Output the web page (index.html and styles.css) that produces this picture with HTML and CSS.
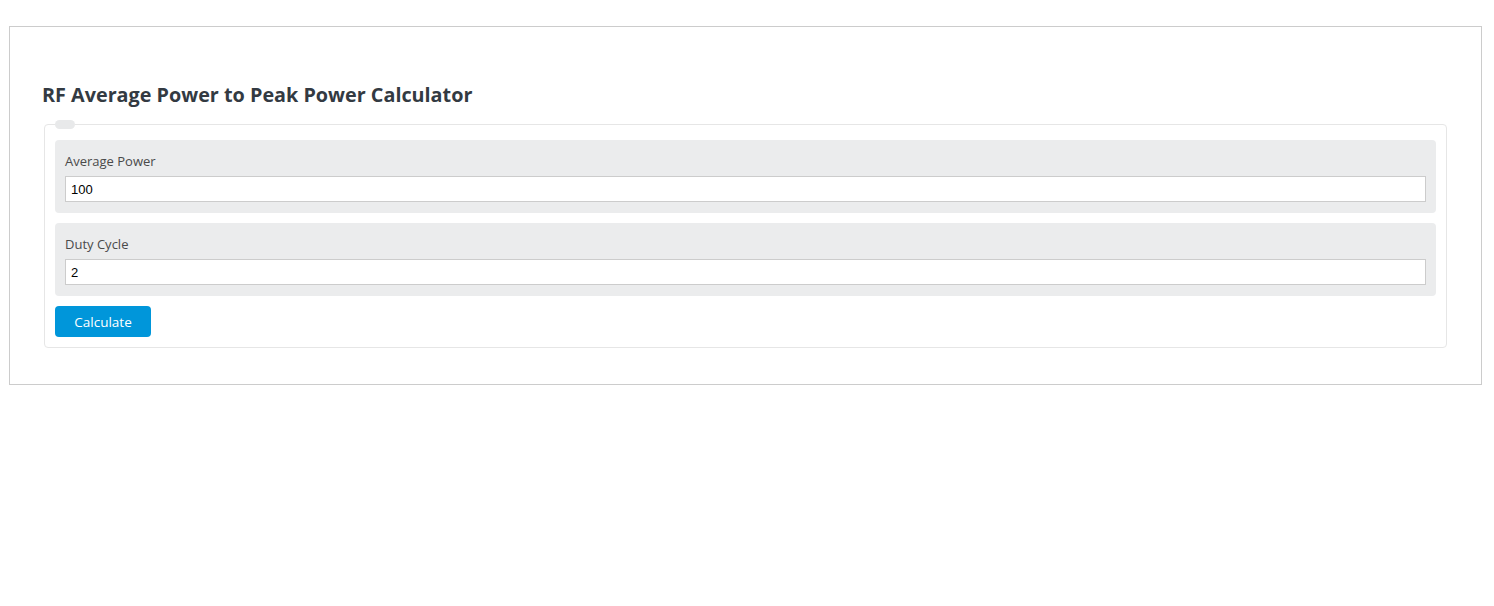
FILE: index.html
```html
<!DOCTYPE html>
<html lang="en">
<head>
<meta charset="utf-8">
<title>RF Average Power to Peak Power Calculator</title>
<link rel="stylesheet" href="styles.css">
</head>
<body>
<div class="calc-box">
  <h2 class="calc-title">RF Average Power to Peak Power Calculator</h2>
  <fieldset class="calc-fieldset">
    <legend class="calc-legend"></legend>
    <div class="field-group">
      <label class="field-label" for="avg">Average Power</label>
      <input class="field-input" id="avg" type="text" value="100">
    </div>
    <div class="field-group">
      <label class="field-label" for="duty">Duty Cycle</label>
      <input class="field-input" id="duty" type="text" value="2">
    </div>
    <button class="calc-button" type="button">Calculate</button>
  </fieldset>
</div>
</body>
</html>
```
FILE: styles.css
```css
html, body {
  margin: 0;
  padding: 0;
  background: #fff;
}
body {
  padding: 26px 12px 0 9px;
  font-family: "Open Sans", "Noto Sans", sans-serif;
  color: #333;
}
.calc-box {
  border: 1px solid #cccccc;
  padding: 50px 34px 36px 34px;
}
.calc-title {
  margin: 0 0 7px -2px;
  font-size: 19.8px;
  line-height: 36px;
  font-weight: 700;
  color: #333a42;
}
.calc-fieldset {
  margin: 0;
  border: 1px solid #e6e6e6;
  border-radius: 4px;
  padding: 11px 10px 10px 10px;
  min-width: 0;
}
.calc-legend {
  margin-left: 0;
  padding: 0;
  width: 20px;
  height: 9px;
  background: #e8e9ea;
  border-radius: 5px;
}
.field-group {
  background: #ebeced;
  border-radius: 4px;
  padding: 10px 10px 11px 10px;
  margin-bottom: 10px;
  display: flex;
  flex-direction: column;
}
.field-label {
  font-size: 13px;
  line-height: 22px;
  color: #4a4a4a;
  margin: 0 0 4px 0;
}
.field-input {
  box-sizing: border-box;
  height: 26px;
  border: 1px solid #cccccc;
  padding: 0 5px;
  font-family: "Liberation Sans", Arial, sans-serif;
  font-size: 13px;
  color: #000;
  background: #fff;
  margin: 0;
}
.calc-button {
  display: block;
  width: 96px;
  height: 31px;
  border: none;
  border-radius: 4px;
  background: #0096da;
  color: #fff;
  font-family: "Open Sans", "Noto Sans", sans-serif;
  font-size: 13.5px;
  padding: 0;
  margin: 0;
}
```
